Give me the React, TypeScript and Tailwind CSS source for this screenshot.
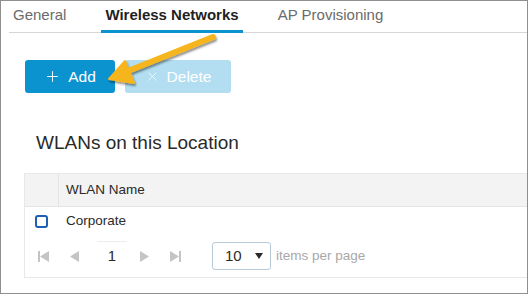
import { Plus, X } from 'lucide-react';

const font = { fontFamily: '"Liberation Sans", Arial, sans-serif' };

function Arrow() {
    return (
        <svg className="absolute left-0 top-0 pointer-events-none" width="528" height="294" viewBox="0 0 528 294">
            <defs>
                <filter id="sh" x="-20%" y="-20%" width="140%" height="140%">
                    <feDropShadow dx="1" dy="2" stdDeviation="1.2" floodColor="#000" floodOpacity="0.45" />
                </filter>
            </defs>
            <g filter="url(#sh)" fill="#f6b51e" stroke="#f6b51e" strokeLinecap="round" strokeLinejoin="round">
                <line x1="212" y1="36" x2="122" y2="72" strokeWidth="6" />
                <polygon points="108,78 124,60 133,82" strokeWidth="2" />
            </g>
        </svg>
    );
}

function Tri({ dir }: { dir: 'l' | 'r' }) {
    return (
        <svg width="9" height="11" viewBox="0 0 9 11">
            {dir === 'l' ? <polygon points="9,0 9,11 0,5.5" fill="#c4c4c4" /> : <polygon points="0,0 0,11 9,5.5" fill="#c4c4c4" />}
        </svg>
    );
}

export default function App() {
    return (
        <div style={font} className="relative w-[528px] h-[294px] overflow-hidden bg-white border border-[#8f8f8f]">
            {/* Tabs */}
            <div className="ml-2 flex h-[32px] border-b border-[#d6d6d6] text-[15px]">
                <div className="pl-[4px] pr-[35px] pt-[3px] text-[#6b6b6b]">General</div>
                <div className="px-[4px] pt-[3px] font-bold text-[#1f1f1f] border-b-[3px] border-[#0b93cf] -mb-px">Wireless Networks</div>
                <div className="pl-[35px] pt-[3px] text-[#6b6b6b]">AP Provisioning</div>
            </div>

            {/* Buttons */}
            <div className="ml-[24px] mt-[27px] flex gap-[10px] text-[15.5px]">
                <button className="flex items-center justify-center gap-[7px] w-[90px] h-[33px] rounded-[3px] bg-[#0b93cf] text-white">
                    <Plus className="w-[17px] h-[17px]" strokeWidth={1.3} />
                    Add
                </button>
                <button className="flex items-center justify-center gap-[7px] w-[106px] h-[33px] rounded-[3px] bg-[#b3def2] text-white">
                    <X className="w-[15px] h-[15px]" strokeWidth={1.1} />
                    Delete
                </button>
            </div>

            {/* Heading */}
            <h2 className="ml-[35px] mt-[38px] text-[19px] leading-[24px] text-[#2a2a2a]">WLANs on this Location</h2>

            {/* Table */}
            <div className="ml-[23px] mt-[18px] border border-[#e8e8e8] border-r-0">
                <div className="flex h-[33px] bg-[#f3f3f3] border-b border-[#e4e4e4] text-[13.5px] text-[#2a2a2a]">
                    <div className="w-[34px] border-r border-[#e4e4e4]" />
                    <div className="pl-[7px] flex items-center">WLAN Name</div>
                </div>
                <div className="flex items-center h-[29px] text-[13.5px] text-[#2a2a2a]">
                    <div className="w-[34px] flex justify-center pr-[2px]">
                        <div className="w-[13px] h-[13px] rounded-[3px] border-2 border-[#1e5fb3]" />
                    </div>
                    <div className="pl-[7px]">Corporate</div>
                </div>
                <div className="flex items-center h-[41px] pb-[1px]">
                    <div className="flex items-center ml-[13px] gap-[21px]">
                        <div className="flex items-center">
                            <div className="w-[2px] h-[11px] bg-[#c4c4c4]" />
                            <Tri dir="l" />
                        </div>
                        <Tri dir="l" />
                    </div>
                    <div className="ml-[18px] w-[30px] h-[31px] border-t border-[#ededed] flex items-center justify-center text-[15px] text-[#2a2a2a]">1</div>
                    <div className="flex items-center ml-[13px] gap-[21px]">
                        <Tri dir="r" />
                        <div className="flex items-center">
                            <Tri dir="r" />
                            <div className="w-[2px] h-[11px] bg-[#c4c4c4]" />
                        </div>
                    </div>
                    <div className="ml-[31px] flex items-center justify-between w-[59px] h-[28px] rounded-[3px] border border-[#b7c9d6] pl-[12px] pr-[7px] text-[15px] text-[#2a2a2a]">
                        10
                        <svg width="8" height="6" viewBox="0 0 8 6"><polygon points="0,0 8,0 4,6" fill="#2a2a2a" /></svg>
                    </div>
                    <div className="ml-[5px] text-[13.5px] text-[#a8a8a8]">items per page</div>
                </div>
            </div>

            <Arrow />
        </div>
    );
}
